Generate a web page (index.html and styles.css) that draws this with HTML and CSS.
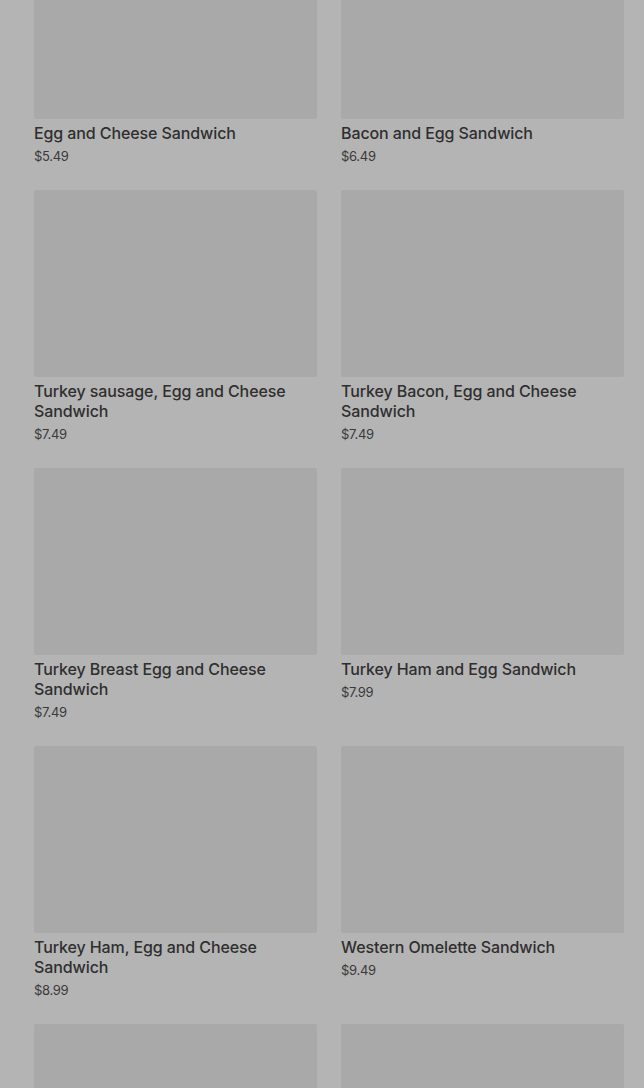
FILE: index.html
```html
<!DOCTYPE html>
<html lang="en">
<head>
  <meta charset="UTF-8" />
  <meta name="viewport" content="width=device-width, initial-scale=1.0"/>
  <title>Breakfast Sandwiches</title>
  <link rel="stylesheet" href="styles.css">
</head>
<body>
  <div class="menu">
    <div class="grid">
      <div class="item">
        <div class="photo"></div>
        <h3 class="name">Egg and Cheese Sandwich</h3>
        <p class="price">$5.49</p>
      </div>
      <div class="item">
        <div class="photo"></div>
        <h3 class="name">Bacon and Egg Sandwich</h3>
        <p class="price">$6.49</p>
      </div>
      <div class="item">
        <div class="photo"></div>
        <h3 class="name">Turkey sausage, Egg and Cheese Sandwich</h3>
        <p class="price">$7.49</p>
      </div>
      <div class="item">
        <div class="photo"></div>
        <h3 class="name">Turkey Bacon, Egg and Cheese Sandwich</h3>
        <p class="price">$7.49</p>
      </div>
      <div class="item">
        <div class="photo"></div>
        <h3 class="name">Turkey Breast Egg and Cheese Sandwich</h3>
        <p class="price">$7.49</p>
      </div>
      <div class="item">
        <div class="photo"></div>
        <h3 class="name">Turkey Ham and Egg Sandwich</h3>
        <p class="price">$7.99</p>
      </div>
      <div class="item">
        <div class="photo"></div>
        <h3 class="name">Turkey Ham, Egg and Cheese Sandwich</h3>
        <p class="price">$8.99</p>
      </div>
      <div class="item">
        <div class="photo"></div>
        <h3 class="name">Western Omelette Sandwich</h3>
        <p class="price">$9.49</p>
      </div>
      <div class="item">
        <div class="photo"></div>
      </div>
      <div class="item">
        <div class="photo"></div>
      </div>
    </div>
  </div>
</body>
</html>
```

FILE: styles.css
```css
body {
  margin: 0;
  padding: 0;
  font-family: Inter, "Noto Sans", sans-serif;
  background-color: #b4b4b4;
  overflow: hidden;
  height: 1088px;
}
.menu {
  padding: 0 20px 0 34px;
  margin-top: -68px;
}
.grid {
  display: grid;
  grid-template-columns: 283px 283px;
  column-gap: 24px;
  row-gap: 25px;
}
.photo {
  height: 187px;
  background-color: #a9a9a9;
  border-radius: 2px;
}
.name {
  margin: 4px 0 0;
  font-size: 16px;
  line-height: 20px;
  font-weight: 500;
  letter-spacing: -0.1px;
  color: #2f2f2f;
}
.price {
  margin: 4px 0 0;
  font-size: 13px;
  line-height: 18px;
  color: #3a3a3a;
  letter-spacing: -0.3px;
}
```
